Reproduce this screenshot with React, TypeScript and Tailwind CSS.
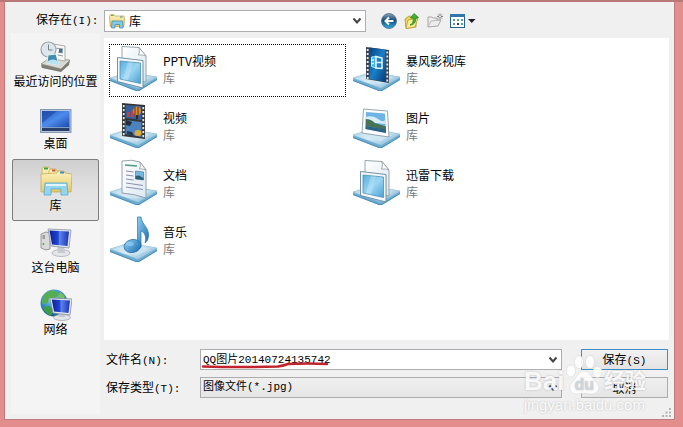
import React, { useState } from 'react';

interface Place {
  name: string;
  icon: React.ReactNode;
}

interface LibraryItem {
  name: string;
  icon: React.ReactNode;
}

// Small latin part of a label, e.g. "(N):"
const Mono: React.FC<{ children: React.ReactNode }> = ({ children }) => (
  <span className="font-['Liberation_Mono',monospace] text-[11px]">{children}</span>
);

const Chevron: React.FC = () => (
  <svg viewBox="0 0 10 8" className="w-2.5 h-2 pointer-events-none absolute right-1 top-1/2 -translate-y-1/2">
    <path d="M1.5 1.5 L5 5.5 L8.5 1.5" fill="none" stroke="#444" strokeWidth="2" />
  </svg>
);

/* ---------- library icons ---------- */

const Defs: React.FC = () => (
  <svg className="absolute w-0 h-0" aria-hidden="true">
    <defs>
      <linearGradient id="tray" x1="0" y1="0" x2="1" y2="0.6">
        <stop offset="0" stopColor="#a5cde4" />
        <stop offset="0.5" stopColor="#dceef8" />
        <stop offset="1" stopColor="#8fc0dc" />
      </linearGradient>
      <linearGradient id="screen" x1="0" y1="0" x2="1" y2="1">
        <stop offset="0" stopColor="#5aaedc" />
        <stop offset="0.5" stopColor="#9bd6f3" />
        <stop offset="1" stopColor="#4a9fd2" />
      </linearGradient>
      <linearGradient id="deep" x1="0" y1="0" x2="1" y2="1">
        <stop offset="0" stopColor="#0c3f7c" />
        <stop offset="0.5" stopColor="#1a80c8" />
        <stop offset="1" stopColor="#083a78" />
      </linearGradient>
      <linearGradient id="paper" x1="0" y1="0" x2="1" y2="1">
        <stop offset="0" stopColor="#ffffff" />
        <stop offset="1" stopColor="#dbe8f1" />
      </linearGradient>
      <linearGradient id="note" x1="0" y1="0" x2="1" y2="1">
        <stop offset="0" stopColor="#8fd0f2" />
        <stop offset="1" stopColor="#1769ad" />
      </linearGradient>
      <linearGradient id="monitor" x1="0" y1="0" x2="1" y2="0">
        <stop offset="0" stopColor="#0a1f9c" />
        <stop offset="0.45" stopColor="#2347d2" />
        <stop offset="0.5" stopColor="#5c86ee" />
        <stop offset="1" stopColor="#1b32b4" />
      </linearGradient>
      <linearGradient id="desk" x1="0" y1="0" x2="1" y2="1">
        <stop offset="0" stopColor="#2257c0" />
        <stop offset="0.5" stopColor="#4d8bea" />
        <stop offset="1" stopColor="#1c4bb0" />
      </linearGradient>
      <linearGradient id="folder" x1="0" y1="0" x2="0" y2="1">
        <stop offset="0" stopColor="#fbf3c0" />
        <stop offset="1" stopColor="#e6c965" />
      </linearGradient>
      <radialGradient id="globe" cx="0.4" cy="0.3" r="0.7">
        <stop offset="0" stopColor="#a6e0f5" />
        <stop offset="0.5" stopColor="#3b95cf" />
        <stop offset="1" stopColor="#135690" />
      </radialGradient>
      <linearGradient id="back" x1="0" y1="0" x2="0" y2="1">
        <stop offset="0" stopColor="#8ea6b8" />
        <stop offset="0.45" stopColor="#164a7e" />
        <stop offset="1" stopColor="#2fb0e0" />
      </linearGradient>
    </defs>
  </svg>
);

const TrayIcon: React.FC<{ children: React.ReactNode }> = ({ children }) => (
  <svg viewBox="0 0 48 48" className="w-12 h-12 flex-none">
    <path d="M0 33 L19 27 L47 32 L47 35 L29 46 L26 46 L0 36 Z" fill="#6fadd0" />
    <path d="M0 35.500 L26 45.500 L29 45.500 L47 34.500" fill="none" stroke="#3f87b5" strokeWidth="0.8" />
    <path d="M0 33 L19 27 L47 32 L28 43 Z" fill="url(#tray)" stroke="#9cc7de" strokeWidth="0.6" />
    <path d="M6 33 L19 29 L40 32.500 L27 39.500 Z" fill="#cfe6f3" opacity="0.8" />
    {children}
  </svg>
);

const GenericLibrary = (
  <TrayIcon>
    <path d="M12 1.500 L29 2.500 L36 11 L36 37 L12 33 Z" fill="url(#paper)" stroke="#8d9ba6" strokeWidth="0.9" />
    <path d="M29 2.500 Q30 8 28.500 10 Q33 9.500 36 11 Z" fill="#fff" stroke="#8d9ba6" strokeWidth="0.8" />
    <path d="M7.500 12.500 L33 15.500 L33 43 L7.500 36.500 Z" fill="#f2f8fc" stroke="#66879b" strokeWidth="0.9" />
    <path d="M10 16 L30.500 18 L30.500 38.500 L10 34 Z" fill="url(#screen)" stroke="#4286ae" strokeWidth="0.7" />
    <path d="M18 17 L23 17.500 L18 35.500 L13 34.500 Z" fill="#d2effb" opacity="0.35" />
  </TrayIcon>
);

const filmHoles = [5, 9, 13, 17, 21, 25, 29, 33];

const StormLibrary = (
  <TrayIcon>
    <path d="M13 2 L36 5 L36 38 L13 34 Z" fill="#3b4550" />
    <path d="M16.500 2.500 L32.500 4.500 L32.500 37 L16.500 34 Z" fill="url(#deep)" />
    {filmHoles.map((y) => (
      <g key={y} fill="#e6edf2">
        <rect x="13.8" y={y - 1} width="1.8" height="2" />
        <rect x="33.400" y={y + 1.500} width="1.8" height="2" />
      </g>
    ))}
    <path d="M18.500 12 L23 11.500 L23 23 L18.500 21.500 Z" fill="#41b5ea" stroke="#bfeafb" strokeWidth="1" />
    <path d="M23 11.500 L29 13 L29 23.500 L23 23 Z" fill="#1d7fc4" stroke="#e2f8ff" strokeWidth="1.500" />
    <path d="M18.500 15 H21 M18.500 18.500 H21 M23 17.500 H29" stroke="#e2f8ff" strokeWidth="1.300" />
  </TrayIcon>
);

const VideoLibrary = (
  <TrayIcon>
    <path d="M12 1 L35 3 L35 37 L12 34 Z" fill="#343434" />
    <path d="M15.500 3 L31.500 4 L31.500 18 L15.500 16 Z" fill="#375f9c" />
    <path d="M15.500 18 L31.500 20 L31.500 35 L15.500 32 Z" fill="#4a83bd" />
    <path d="M17 10 L20 10 L20 15 L17 15 Z M21 8 L24 9 L24 15 L21 15 Z" fill="#cf3a35" />
    <ellipse cx="27" cy="9" rx="4" ry="4.5" fill="#d98c30" />
    <path d="M25 5 L25 13 M28 5 L28 13" stroke="#5e3425" strokeWidth="1" />
    <path d="M26 13 L28.500 13 L28 17 L26 17 Z" fill="#39271d" />
    <path d="M16 18 L22 20 L20 24 L16 23 Z" fill="#252d38" />
    <ellipse cx="28" cy="31" rx="3.500" ry="3" fill="#e0ac3b" />
    <path d="M17 29 L22 30 L24 34 L17 32 Z" fill="#243652" />
    {filmHoles.map((y) => (
      <g key={y} fill="#dfeae8">
        <rect x="12.8" y={y - 2} width="1.8" height="2.2" />
        <rect x="32.4" y={y} width="1.8" height="2.2" />
      </g>
    ))}
  </TrayIcon>
);

const PictureLibrary = (
  <TrayIcon>
    <path d="M10.500 7 L34.500 9 L36 35 L9 31 Z" fill="#fbfdff" stroke="#8b9ca8" strokeWidth="0.9" />
    <path d="M13 10 L32 11.500 L33 31 L12.500 27 Z" fill="#6db4e4" />
    <path d="M13 15 Q20 13 25 17 T32 18 L32 22 L13 20 Z" fill="#d8edf8" />
    <path d="M12.800 17 Q18 17 22 21 L33 24.500 L33 28 L12.700 24 Z" fill="#487358" />
    <path d="M12.700 24 L33 27.500 L33 31 L12.500 27 Z" fill="#2c6286" />
  </TrayIcon>
);

const DocumentLibrary = (
  <TrayIcon>
    <path d="M12 2 Q22 0 30 3 L36 11 L36 39 Q25 35 12 34 Z" fill="url(#paper)" stroke="#8d97a2" strokeWidth="0.9" />
    <path d="M30 3 Q31 7 29.500 10 Q33 9.500 36 11 Z" fill="#fff" stroke="#8d97a2" strokeWidth="0.8" />
    <path d="M15 6 L27 7" stroke="#4f9a8a" strokeWidth="1.6" />
    <path d="M16 12 L23.500 13 M16 16 L23.500 17 M16 20 L23.500 21 M16 24 L33 26.500 M16 28 L33 30.500" stroke="#8d8dab" strokeWidth="1" />
    <path d="M25.500 12 L33.500 13 L33.500 21 L25.500 20 Z" fill="#76b8dd" stroke="#386b91" strokeWidth="0.6" />
    <path d="M25.500 17 L29 16.500 L33.500 19 L33.500 21 L25.500 20 Z" fill="#2b5f79" />
  </TrayIcon>
);

const MusicLibrary = (
  <TrayIcon>
    <path d="M27.500 1 L31 1 C32 9 39 11 38.500 20 C38 25 36 26 35 27 C37 20 34 16 31 15 L31 31 L27.500 31 Z" fill="url(#note)" stroke="#2775af" strokeWidth="0.7" />
    <ellipse cx="22.500" cy="30" rx="8.500" ry="6.500" transform="rotate(-12 22.500 30)" fill="url(#note)" stroke="#1a65a4" strokeWidth="0.7" />
    <ellipse cx="20" cy="28" rx="4" ry="2" fill="#a5dcf5" opacity="0.5" />
  </TrayIcon>
);

/* ---------- places bar icons ---------- */

const RecentIcon = (
  <svg viewBox="0 0 32 32" className="w-8 h-8">
    <path d="M1 24 L8 18 L30 19 L29 24 L21 31 L2 27 Z" fill="#7c7c74" />
    <path d="M1 23 L8 18 L30 19 L21 28 Z" fill="#d8d9d4" stroke="#8c8c86" strokeWidth="0.7" />
    <path d="M13 3 L25 5 L25 20 L13 18 Z" fill="#f8f8f4" stroke="#9a9a92" strokeWidth="0.8" />
    <path d="M15 7 L23 8 M18 11 L23 12 M18 14 L23 15" stroke="#8a9aa6" strokeWidth="1" />
    <rect x="19" y="8" width="3.500" height="3.500" fill="#3e6f8b" />
    <circle cx="8.500" cy="8.500" r="7.500" fill="#dce6eb" stroke="#9aa6ac" strokeWidth="1.200" />
    <path d="M8.500 3.500 L8.500 9 L12.500 9" fill="none" stroke="#71858f" strokeWidth="1" />
    <path d="M8 14 L16 13 L19 24 L7 22 Z" fill="#408cae" stroke="#e9f3f7" strokeWidth="1" />
    <path d="M8 20 Q13 17 18 20 L19 24 L7 22 Z" fill="#b8e4f1" />
  </svg>
);

const DesktopIcon = (
  <svg viewBox="0 0 32 32" className="w-8 h-8">
    <rect x="0.500" y="6.500" width="30.500" height="23" fill="#b5c6dc" stroke="#8799b2" />
    <rect x="2" y="8" width="27.500" height="16" fill="url(#desk)" />
    <path d="M2 8 L17 8 L2 20 Z" fill="#173f99" opacity="0.5" />
    <rect x="2" y="24" width="27.500" height="4" fill="#29406b" />
    <rect x="2" y="24" width="27.500" height="1" fill="#7e9cc7" />
  </svg>
);

const FoldersIcon = (
  <svg viewBox="0 0 32 32" className="w-8 h-8">
    <path d="M2 4 L3 2 L9 2 L10 4 L16 5 L16 26 L2 26 Z" fill="url(#folder)" stroke="#c4a54b" strokeWidth="0.700" />
    <rect x="4" y="2.500" width="4" height="2" fill="#3ba548" />
    <path d="M9 6 L10 4 L16 4 L17 6 L25 7 L25 26 L9 26 Z" fill="url(#folder)" stroke="#c4a54b" strokeWidth="0.700" />
    <rect x="12" y="4.500" width="3.500" height="2" fill="#c85736" />
    <path d="M17 8 L18 6 L24 6 L25 8 L32 9 L31 27 L1 27 L1 9 Z" fill="url(#folder)" stroke="#c4a54b" strokeWidth="0.700" />
    <rect x="20" y="6.500" width="4" height="2" fill="#398cc1" />
    <path d="M5 18 L27 18 L28 30 L21 30 L21 24 L11 24 L11 30 L4 30 Z" fill="#93d4ee" stroke="#5ba9cd" strokeWidth="0.800" />
    <path d="M6 19 L26 19 L26 21 L6 21 Z" fill="#dff6ff" />
  </svg>
);

const ComputerIcon = (
  <svg viewBox="0 0 32 32" className="w-8 h-8">
    <path d="M1 7 L6 5 L10 6 L10 22 L6 23 L1 21 Z" fill="#dadada" stroke="#858585" strokeWidth="0.800" />
    <path d="M2.500 9 L5 9 M2.500 11 L5 11" stroke="#5d5d5d" strokeWidth="1" />
    <circle cx="3.500" cy="17" r="1" fill="#4cae45" />
    <ellipse cx="21" cy="26" rx="9" ry="3.500" fill="#e3e5e8" stroke="#a0a5ab" strokeWidth="0.700" />
    <path d="M17 19 L24 19 L25 26 L18 26 Z" fill="#c5cad1" />
    <path d="M8 2 L31 3 L29 21 L11 19 Z" fill="#dfe4ec" stroke="#8c95a4" strokeWidth="0.800" />
    <path d="M9.500 3.500 L29 4.500 L27.500 19 L12 17.500 Z" fill="url(#monitor)" />
  </svg>
);

const NetworkIcon = (
  <svg viewBox="0 0 32 32" className="w-8 h-8">
    <circle cx="14" cy="14" r="13.500" fill="url(#globe)" />
    <path d="M3 7 Q9 0 16 2 L19 6 L14 10 L9 9 L8 14 L2 15 Z" fill="#55ad51" />
    <path d="M3 18 L9 17 L13 22 L11 27 Q4 24 3 18 Z" fill="#3d9c43" />
    <path d="M20 3 L25 7 L24 10 L18 8 Z" fill="#78c05e" />
    <ellipse cx="22" cy="28.500" rx="8.500" ry="3" fill="#e3e5e8" stroke="#999fa8" strokeWidth="0.700" />
    <path d="M18 23 L24 23 L25 28 L19 28 Z" fill="#c2c8d0" />
    <path d="M10 9 L32 10 L30 26 L13 24 Z" fill="#e3e8ef" stroke="#8991a0" strokeWidth="0.800" />
    <path d="M11.800 10.500 L30 11.500 L28.500 24 L14 22.500 Z" fill="url(#monitor)" />
  </svg>
);

/* ---------- toolbar icons ---------- */

const BackIcon = (
  <svg viewBox="0 0 16 16" className="w-4 h-4">
    <circle cx="8" cy="8" r="7.500" fill="url(#back)" stroke="#4f6d86" strokeWidth="0.800" />
    <path d="M8 4.500 L4.500 8 L8 11.500 M4.500 8 L12.500 8" fill="none" stroke="#fff" strokeWidth="2" />
  </svg>
);

const UpIcon = (
  <svg viewBox="0 0 16 16" className="w-4 h-4">
    <path d="M1 6 L5 3 L12 4 L12 14 L2 15.500 Z" fill="#ead45e" stroke="#b4952b" strokeWidth="0.800" />
    <path d="M2 15.500 L4 7 L14 5 L11 14 Z" fill="#f8ec8e" stroke="#b4952b" strokeWidth="0.700" />
    <path d="M6 12 C9 11 9.500 8 9 5 L6.500 5 L10 0.500 L14.500 4.500 L12 5 C12 9 10 12 6 12 Z" fill="#3eb336" stroke="#217a1e" strokeWidth="0.700" />
  </svg>
);

const NewFolderIcon = (
  <svg viewBox="0 0 16 16" className="w-4 h-4">
    <path d="M1 14 L1 4 L5 4 L6 5 L10 5 L10 7 L14 7 L11 13 Z" fill="#ededed" stroke="#a6a6a6" />
    <path d="M1 14 L4 8 L14 7" fill="none" stroke="#b8b8b8" />
    <path d="M13 0.500 L13 6.500 M10 3.500 L16 3.500 M11 1.500 L15 5.500 M15 1.500 L11 5.500" stroke="#777" strokeWidth="0.900" />
    <circle cx="13" cy="3.500" r="1" fill="#eee" />
  </svg>
);

const ViewIcon = (
  <svg viewBox="0 0 26 16" className="w-[26px] h-4">
    <rect x="0.500" y="1.500" width="14" height="13" fill="#fff" stroke="#23618f" />
    <rect x="0" y="1" width="15" height="3" fill="#2f77a8" />
    <path d="M3 6 h2 v2 h-2 Z M7 6 h2 v2 h-2 Z M11 6 h2 v2 h-2 Z M3 10 h2 v2 h-2 Z M11 10 h2 v2 h-2 Z" fill="#5d9a92" />
    <path d="M7 10 h2 v2 h-2 Z" fill="#1c3d77" />
    <path d="M18 6 L25.500 6 L21.750 10 Z" fill="#1c1c28" />
  </svg>
);

const SmallFolderIcon: React.FC = () => (
  <svg viewBox="0 0 16 16" className="w-4 h-4 pointer-events-none absolute left-[5px] top-[3px]">
    <path d="M0.500 3 L1.500 1.500 L5 1.500 L6 3 L15 3 L15.500 5 L15 13.500 L1 13.500 Z" fill="url(#folder)" stroke="#c0a04c" strokeWidth="0.700" />
    <rect x="2" y="2" width="2.500" height="1" fill="#4ca859" />
    <rect x="11" y="3.500" width="2.500" height="1" fill="#3f8fc0" />
    <path d="M3 8 L13.500 8 L14 15 L10.500 15 L10.500 11.500 L6 11.500 L6 15 L2.500 15 Z" fill="#84c9e6" stroke="#478fb4" strokeWidth="0.800" />
  </svg>
);

const tools = [
  { label: '返回', icon: BackIcon },
  { label: '向上一级', icon: UpIcon },
  { label: '新建文件夹', icon: NewFolderIcon },
  { label: '查看', icon: ViewIcon },
];

const places: Place[] = [
  { name: '最近访问的位置', icon: RecentIcon },
  { name: '桌面', icon: DesktopIcon },
  { name: '库', icon: FoldersIcon },
  { name: '这台电脑', icon: ComputerIcon },
  { name: '网络', icon: NetworkIcon },
];

const libraries: LibraryItem[] = [
  { name: 'PPTV视频', icon: GenericLibrary },
  { name: '暴风影视库', icon: StormLibrary },
  { name: '视频', icon: VideoLibrary },
  { name: '图片', icon: PictureLibrary },
  { name: '文档', icon: DocumentLibrary },
  { name: '迅雷下载', icon: GenericLibrary },
  { name: '音乐', icon: MusicLibrary },
];

const Watermark: React.FC = () => (
  <div className="pointer-events-none absolute right-7 bottom-1 w-[122px] text-white/90 text-shadow-[0_0_2px_#00000040] font-['Liberation_Sans','Noto_Sans_CJK_SC',sans-serif]">
    <div className="flex items-end justify-between">
      <span className="text-[26px] leading-7 font-bold">Bai</span>
      <div className="relative">
        <svg viewBox="0 0 36 40" className="w-9 h-10">
          <g fill="#fff" stroke="#d5d9dc" strokeWidth="0.600" opacity="0.9">
            <ellipse cx="5" cy="16" rx="4.500" ry="6" />
            <ellipse cx="13" cy="7" rx="4.500" ry="6.500" />
            <ellipse cx="24" cy="7" rx="4.500" ry="6.500" />
            <ellipse cx="31.500" cy="17" rx="4.500" ry="5.500" />
            <path d="M18 16 C24 16 25 23 30 27 C36 33 31 40 24 39 C20 38 16 38 12 39 C5 40 1 33 6 27 C11 23 12 16 18 16 Z" />
          </g>
        </svg>
        <span className="absolute inset-x-0 bottom-0 text-center text-base leading-5 font-bold text-[#cfd5da]">du</span>
      </div>
      <span className="text-[21px] leading-7 font-bold">经验</span>
    </div>
    <div className="text-[15px] leading-5 whitespace-nowrap">jingyan.baidu.com</div>
  </div>
);

export default function App() {
  const [place, setPlace] = useState('库');
  const [selected, setSelected] = useState('PPTV视频');
  const [fileName, setFileName] = useState('QQ图片20140724135742');

  return (
    <div className="min-h-screen flex flex-col bg-[#e38d8d] border-t-2 border-[#b87878] pl-1 pr-2 pb-[7px] text-xs text-black font-['Noto_Sans_CJK_SC',sans-serif]">
      <Defs />
      <div className="relative flex-1 flex flex-col bg-[#f0f0f0] border border-t-0 border-[#bd7b7b] pt-2 pb-[5px]">
        <header className="flex items-center pl-[31px]">
          <label htmlFor="location" className="w-[68px] flex-none leading-4 pb-0.5">
            保存在<Mono>(I):</Mono>
          </label>
          <div className="relative w-[41%]">
            <select id="location" className="block appearance-none w-full h-[22px] pl-6 bg-white border border-[#abadb3] outline-none">
              <option>库</option>
            </select>
            <SmallFolderIcon />
            <Chevron />
          </div>
          <div className="flex items-center gap-[7px] pl-[15px]">
            {tools.map((tool) => (
              <button key={tool.label} type="button" aria-label={tool.label}>
                {tool.icon}
              </button>
            ))}
          </div>
        </header>

        <div className="flex-1 flex gap-1 pl-1.5 pr-[5px] pt-px">
          <nav className="w-[89px] flex-none bg-[#f4f4f4] pt-0.5 px-px">
            {places.map((p) => (
              <button
                key={p.name}
                type="button"
                onClick={() => setPlace(p.name)}
                className={
                  p.name === place
                    ? 'w-full h-[62px] flex flex-col items-center pt-[5px] leading-4 whitespace-nowrap border border-[#7d7d7d] rounded-xs bg-linear-to-b from-[#cfcfcf] via-[#e2e2e2] to-[#e6e6e6]'
                    : 'w-full h-[62px] flex flex-col items-center pt-1.5 leading-4 whitespace-nowrap'
                }
              >
                {p.icon}
                <span>{p.name}</span>
              </button>
            ))}
          </nav>

          <main className="flex-1 flex flex-col pt-[5px] pb-4">
            <div className="flex-1 bg-white pl-[5px] pt-1.5 pb-1">
              <div className="grid grid-cols-2 gap-x-1.5 gap-y-1 max-w-[480px]">
                {libraries.map((item) => (
                  <button
                    key={item.name}
                    type="button"
                    onClick={() => setSelected(item.name)}
                    className={
                      item.name === selected
                        ? 'h-[53px] flex items-start gap-[5px] text-left border border-dotted border-black outline-none'
                        : 'h-[53px] flex items-start gap-[5px] text-left border border-transparent outline-none'
                    }
                  >
                    {item.icon}
                    <span className="flex flex-col leading-[17px] pt-[7px]">
                      <span>{item.name}</span>
                      <span className="text-[#7a7a7a]">库</span>
                    </span>
                  </button>
                ))}
              </div>
            </div>

            <form className="grid grid-cols-[96px_1fr_107px] gap-y-[7px] pt-[9px] items-center" onSubmit={(e) => e.preventDefault()}>
              <label htmlFor="filename" className="pl-0.5 leading-4">
                文件名<Mono>(N):</Mono>
              </label>
              <div className="relative">
                <input
                  id="filename"
                  value={fileName}
                  onChange={(e) => setFileName(e.target.value)}
                  className="block w-full h-[21px] pl-0.5 pr-5 pb-1 bg-white border border-[#abadb3] outline-none text-[11px] font-['Liberation_Mono','Noto_Sans_CJK_SC',monospace]"
                />
                <Chevron />
                <svg viewBox="0 0 130 8" className="pointer-events-none absolute left-0 top-3 w-[130px] h-2">
                  <path d="M3 5.500 Q40 6.500 78 5.500 Q84 4.500 88 3 Q108 2 127 3" fill="none" stroke="#c0242c" strokeWidth="2.500" strokeLinecap="round" />
                </svg>
              </div>
              <div className="pl-[19px] pr-px">
                <button type="submit" className="block w-full h-[21px] border border-[#3f8fc6] bg-linear-to-b from-[#f2f2f2] to-[#e3e3e3] leading-4">
                  保存<Mono>(S)</Mono>
                </button>
              </div>

              <label htmlFor="filetype" className="pl-0.5 leading-4">
                保存类型<Mono>(T):</Mono>
              </label>
              <div className="relative">
                <select
                  id="filetype"
                  className="block appearance-none w-full h-[21px] pl-0.5 border border-[#acacac] bg-linear-to-b from-[#f0f0f0] to-[#e5e5e5] outline-none text-[11px] font-['Liberation_Mono','Noto_Sans_CJK_SC',monospace]"
                >
                  <option>图像文件(*.jpg)</option>
                </select>
                <Chevron />
              </div>
              <div className="pl-[19px] pr-px">
                <button type="button" className="block w-full h-[21px] border border-[#acacac] bg-linear-to-b from-[#f0f0f0] to-[#e5e5e5] leading-4">
                  取消
                </button>
              </div>
            </form>
          </main>
        </div>

        <svg viewBox="0 0 9 9" className="absolute right-[3px] bottom-0.5 w-[9px] h-[9px]">
          <path d="M7 0h2v2h-2Z M7 3.500h2v2h-2Z M3.500 3.500h2v2h-2Z M7 7h2v2h-2Z M3.500 7h2v2h-2Z M0 7h2v2h-2Z" fill="#b5b5b5" />
        </svg>
        <Watermark />
      </div>
    </div>
  );
}
